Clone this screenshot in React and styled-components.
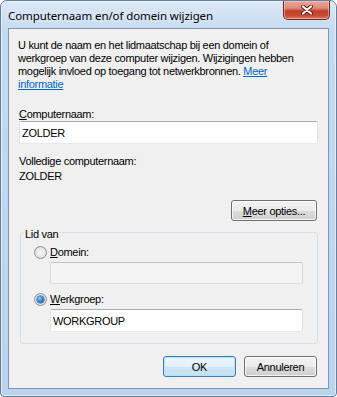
import React from 'react';
import styled, { createGlobalStyle } from 'styled-components';

const GlobalStyle = createGlobalStyle`
  html, body {
    margin: 0;
    padding: 0;
    background: #ffffff;
  }
  body {
    font-family: 'Liberation Sans', Arial, sans-serif;
  }
`;

const Window = styled.div`
  width: 337px;
  height: 397px;
  box-sizing: border-box;
  display: flex;
  flex-direction: column;
  padding: 0 7px 7px;
  border: 1px solid #5f7fa6;
  border-radius: 7px 7px 4px 4px;
  background: linear-gradient(180deg, #dbe8f6 0px, #c6daf0 30px, #bcd3ec 100%);
  box-shadow: inset 0 0 0 1px rgba(255, 255, 255, 0.55);
`;

const TitleBar = styled.div`
  height: 29px;
  display: flex;
  align-items: flex-start;
  justify-content: space-between;
`;

const TitleText = styled.div`
  margin-top: 7px;
  font-family: 'Noto Sans', 'Open Sans', sans-serif;
  font-size: 11.5px;
  letter-spacing: -0.1px;
  line-height: 16px;
  color: #000;
  text-shadow: 0 0 6px rgba(255, 255, 255, 0.9);
`;

const CloseButton = styled.div`
  width: 47px;
  height: 19px;
  margin-right: -1px;
  box-sizing: border-box;
  border: 1px solid #6b2d24;
  border-top: none;
  border-radius: 0 0 5px 5px;
  background: linear-gradient(180deg, #eaa898 0%, #dc8a78 40%, #c4402b 55%, #c94a34 80%, #e07b5f 100%);
  box-shadow: inset 0 0 0 1px rgba(255, 210, 200, 0.5);
  display: flex;
  align-items: center;
  justify-content: center;
`;

const Panel = styled.div`
  flex: 1;
  display: flex;
  flex-direction: column;
  padding: 10px 10px 11px;
  background: #f0f0f0;
  border: 1px solid #7f97b5;
  font-size: 11px;
  letter-spacing: -0.3px;
  color: #000;
`;

const Intro = styled.p`
  margin: 0 0 0 -1px;
  line-height: 13px;
`;

const InfoLink = styled.a`
  color: #0066cc;
  text-decoration: underline;
`;

const Label = styled.div`
  margin-top: ${(p) => p.$gap || 0}px;
  line-height: 13px;
`;

const TextBox = styled.input`
  display: block;
  box-sizing: border-box;
  width: auto;
  height: ${(p) => p.$h || 23}px;
  margin: ${(p) => p.$top || 0}px 0 0 ${(p) => p.$left || 0}px;
  padding: 0 2px;
  font-family: 'Liberation Sans', Arial, sans-serif;
  font-size: 11px;
  letter-spacing: -0.3px;
  color: #000;
  background: ${(p) => (p.disabled ? '#f4f4f4' : '#ffffff')};
  border: 1px solid;
  border-color: ${(p) =>
    p.disabled ? '#c4c4c4 #d9d9d9 #dedede #d9d9d9' : '#abadb3 #dbdfe6 #e3e9ef #e2e3ea'};
  border-radius: 2px;
  outline: none;
`;

const Button = styled.button`
  box-sizing: border-box;
  width: ${(p) => p.$w}px;
  height: 21px;
  padding: 0;
  font-family: 'Liberation Sans', Arial, sans-serif;
  font-size: 11px;
  letter-spacing: -0.3px;
  color: #000;
  border: 1px solid ${(p) => (p.$primary ? '#3c7fb1' : '#707070')};
  border-radius: 3px;
  background: ${(p) =>
    p.$primary
      ? 'linear-gradient(180deg, #edf6fc 0%, #e3f0fa 50%, #d0e7f6 51%, #c4e0f3 100%)'
      : 'linear-gradient(180deg, #f2f2f2 0%, #ebebeb 50%, #dddddd 51%, #cfcfcf 100%)'};
  box-shadow: inset 0 0 0 1px ${(p) => (p.$primary ? 'rgba(180, 225, 250, 0.9)' : 'rgba(255, 255, 255, 0.75)')};
`;

const OptionsButton = styled(Button)`
  align-self: flex-end;
  margin: 17px 1px 0 0;
`;

const GroupBox = styled.fieldset`
  margin: 3px 0 0 1px;
  padding: 0 14px 11px 2px;
  border: 1px solid #d5dfe5;
  border-radius: 3px;
  display: flex;
  flex-direction: column;
  min-width: 0;
`;

const Legend = styled.legend`
  padding: 4px 2px 0;
  line-height: 13px;
`;

const RadioRow = styled.label`
  display: flex;
  align-items: center;
  gap: 3px;
  height: 13px;
  line-height: 13px;
  margin: ${(p) => p.$top || 0}px 0 0 11px;
`;

const Radio = styled.span`
  position: relative;
  width: 13px;
  height: 13px;
  box-sizing: border-box;
  border-radius: 50%;
  border: 1px solid #8e8f8f;
  background: radial-gradient(circle at 50% 50%, #f6f6f6 0%, #e6e6e6 55%, #cfcfcf 100%);

  &::after {
    content: '';
    display: ${(p) => (p.$checked ? 'block' : 'none')};
    position: absolute;
    left: 2px;
    top: 2px;
    width: 7px;
    height: 7px;
    border-radius: 50%;
    background: radial-gradient(circle at 40% 35%, #8fd0f5 0%, #2f8ad0 45%, #11508f 100%);
    box-shadow: 0 0 0 0.5px #1c5a92;
  }
`;

const ButtonRow = styled.div`
  display: flex;
  justify-content: flex-end;
  gap: 8px;
  margin: 12px 1px 0 0;
`;

const CloseGlyph = () => (
  <svg width="12" height="10" viewBox="0 0 12 10">
    <path d="M2 1.5 L10 8.5 M10 1.5 L2 8.5" stroke="#5a1c12" strokeWidth="4" strokeLinecap="round" />
    <path d="M2 1.5 L10 8.5 M10 1.5 L2 8.5" stroke="#ffffff" strokeWidth="2.2" strokeLinecap="round" />
  </svg>
);

export default function App() {
  return (
    <>
      <GlobalStyle />
      <Window>
        <TitleBar>
          <TitleText>Computernaam en/of domein wijzigen</TitleText>
          <CloseButton>
            <CloseGlyph />
          </CloseButton>
        </TitleBar>
        <Panel>
          <Intro>
            U kunt de naam en het lidmaatschap bij een domein of
            <br />
            werkgroep van deze computer wijzigen. Wijzigingen hebben
            <br />
            mogelijk invloed op toegang tot netwerkbronnen. <InfoLink href="#">Meer</InfoLink>
            <br />
            <InfoLink href="#">informatie</InfoLink>
          </Intro>

          <Label $gap={17}>
            <u>C</u>omputernaam:
          </Label>
          <TextBox value="ZOLDER" readOnly />

          <Label $gap={11}>Volledige computernaam:</Label>
          <Label $gap={2}>ZOLDER</Label>

          <OptionsButton $w={86}>
            <u>M</u>eer opties...
          </OptionsButton>

          <GroupBox>
            <Legend>Lid van</Legend>
            <RadioRow $top={5}>
              <Radio />
              <span>
                <u>D</u>omein:
              </span>
            </RadioRow>
            <TextBox disabled value="" readOnly $h={22} $top={3} $left={27} />
            <RadioRow $top={9}>
              <Radio $checked />
              <span>
                <u>W</u>erkgroep:
              </span>
            </RadioRow>
            <TextBox value="WORKGROUP" readOnly $top={3} $left={27} />
          </GroupBox>

          <ButtonRow>
            <Button $primary $w={73}>OK</Button>
            <Button $w={73}>Annuleren</Button>
          </ButtonRow>
        </Panel>
      </Window>
    </>
  );
}
